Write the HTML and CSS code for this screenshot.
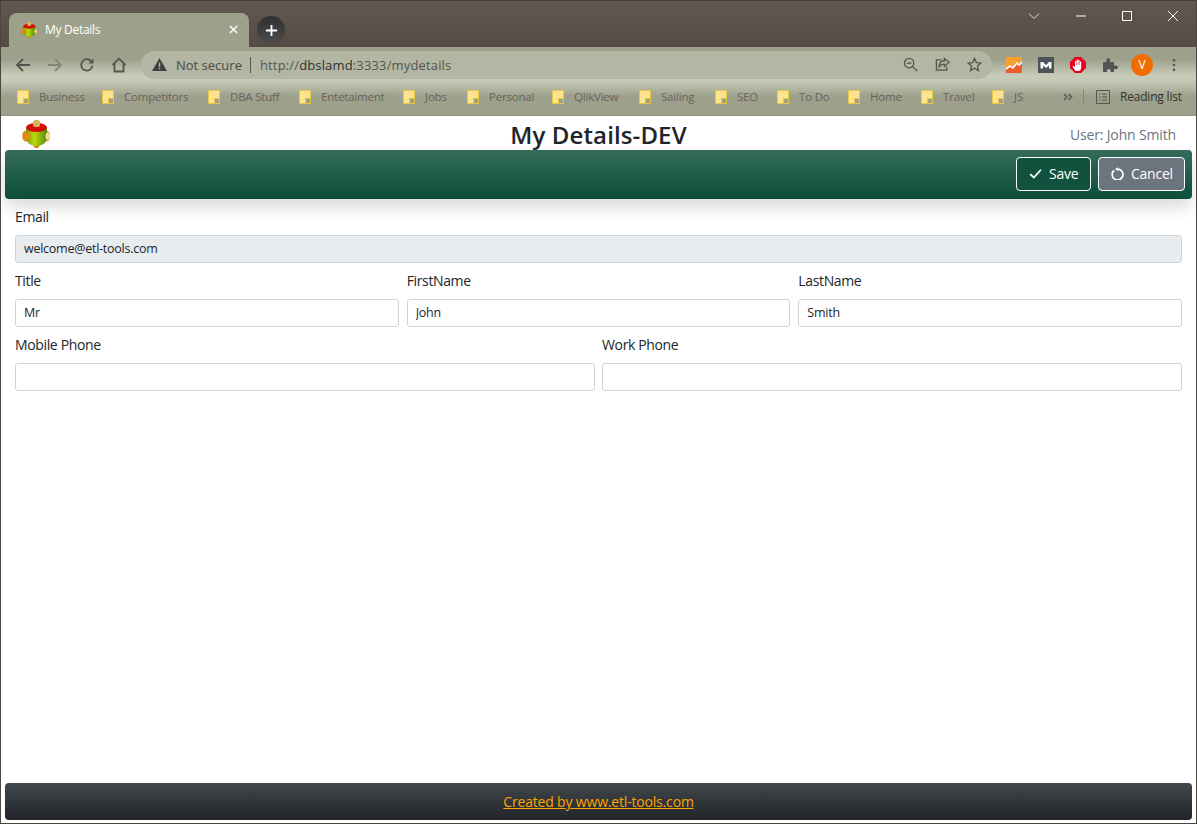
FILE: index.html
```html
<!DOCTYPE html>
<html lang="en">
<head>
<meta charset="utf-8">
<title>My Details</title>
<link rel="stylesheet" href="styles.css">
</head>
<body>
<div class="window">
  <div class="titlebar">
    <div class="tab">
      <svg class="favicon" viewBox="0 0 28 28"><use href="#logo"/></svg>
      <span class="tab-title">My Details</span>
      <svg class="tab-close" viewBox="0 0 10 10"><path d="M1 1l8 8M9 1l-8 8"/></svg>
    </div>
    <div class="newtab"><svg viewBox="0 0 14 14"><path d="M7 1v12M1 7h12"/></svg></div>
    <div class="winctl">
      <svg class="wc wc-chev" viewBox="0 0 12 12"><path d="M1 3.500l5 5 5-5"/></svg>
      <svg class="wc wc-min" viewBox="0 0 12 12"><path d="M1 6h10"/></svg>
      <svg class="wc wc-max" viewBox="0 0 12 12"><path d="M1.500 1.500h9v9h-9z"/></svg>
      <svg class="wc wc-close" viewBox="0 0 12 12"><path d="M1 1l10 10M11 1L1 11"/></svg>
    </div>
  </div>
  <div class="navbar">
    <svg class="nav" viewBox="0 0 16 16"><path d="M15 8H2M8 2L2 8l6 6"/></svg>
    <svg class="nav nav-off" viewBox="0 0 16 16"><path d="M1 8h13M8 2l6 6-6 6"/></svg>
    <svg class="nav" viewBox="0 0 16 16"><path d="M13.500 8.500a5.700 5.700 0 1 1-1.400-4.400"/><path class="fill" d="M14.500 1.500v5h-5z"/></svg>
    <svg class="nav" viewBox="0 0 16 16"><path d="M1.500 8L8 1.700 14.500 8M3.500 6.500v8h9v-8"/></svg>
    <div class="omnibox">
      <svg class="warn" viewBox="0 0 16 14"><path d="M8 0l8 14H0z"/><path class="warn-mark" d="M8 5v4.500M8 10.500v1.500"/></svg>
      <span class="notsecure">Not secure</span>
      <span class="omni-sep"></span>
      <span class="url">http://<b>dbslamd</b>:3333/mydetails</span>
      <svg class="omni-ic" viewBox="0 0 16 16"><circle cx="6.500" cy="6.500" r="5"/><path d="M10 10l5 5M4 6.500h5"/></svg>
      <svg class="omni-ic" viewBox="0 0 16 16"><path d="M7 3H1.500v11h11v-4"/><path d="M15 5.500L10 1.500v2.500C6 4 4.500 7 4.500 10.500 6 8 8 7.500 10 7.500V10z"/></svg>
      <svg class="omni-ic" viewBox="0 0 16 16"><path d="M8 1.500l2 4.500 4.800.500-3.600 3.200 1 4.800L8 12l-4.200 2.500 1-4.800L1.200 6.500 6 6z"/></svg>
    </div>
    <svg class="ext" viewBox="0 0 16 16"><rect width="16" height="16" fill="#f6a02d"/><path d="M0 11l4-3 3 2 4-5 2 2 3-3v12H0z" fill="#ee5a2b"/><path d="M0 12l4-3 3 2 4-5 2 2 3-3" fill="none" stroke="#fff" stroke-width="1.600"/></svg>
    <svg class="ext" viewBox="0 0 16 16"><rect width="16" height="16" fill="#4a5358"/><path d="M2.500 11.500V5h2.500L8 8l3-3h2.500v6.500h-2.500V8.500L8 11 5 8.500v3z" fill="#fff"/></svg>
    <svg class="ext" viewBox="0 0 16 16"><path d="M5 0h6l5 5v6l-5 5H5l-5-5V5z" fill="#e8001c"/><path d="M5.500 14L2.500 9.500l1-.800L5 10V4h1.200v4h.4V2.500h1.300V8h.4V3h1.300v5h.4V4.500h1.200V10.500c0 2-1 3.500-3 3.500z" fill="#fff"/></svg>
    <svg class="ext puzzle" viewBox="0 0 16 16"><path d="M1 5h3.500C4 2 5 1 6.200 1s2.200 1 1.800 4H12v3.500c3-.500 4 .600 4 1.800s-1 2.200-4 1.700V15H8.500c.500-2.500-.600-3-1.700-3S4.700 12.500 5.200 15H1z" fill="#555"/></svg>
    <div class="avatar">V</div>
    <svg class="kebab" viewBox="0 0 4 16"><circle cx="2" cy="2.500" r="1.500"/><circle cx="2" cy="8" r="1.500"/><circle cx="2" cy="13.500" r="1.500"/></svg>
  </div>
  <div class="bookmarks">
    <div class="bm bm-1"><i class="folder"></i>Business</div>
    <div class="bm bm-2"><i class="folder"></i>Competitors</div>
    <div class="bm bm-3"><i class="folder"></i>DBA Stuff</div>
    <div class="bm bm-4"><i class="folder"></i>Entetaiment</div>
    <div class="bm bm-5"><i class="folder"></i>Jobs</div>
    <div class="bm bm-6"><i class="folder"></i>Personal</div>
    <div class="bm bm-7"><i class="folder"></i>QlikView</div>
    <div class="bm bm-8"><i class="folder"></i>Sailing</div>
    <div class="bm bm-9"><i class="folder"></i>SEO</div>
    <div class="bm bm-10"><i class="folder"></i>To Do</div>
    <div class="bm bm-11"><i class="folder"></i>Home</div>
    <div class="bm bm-12"><i class="folder"></i>Travel</div>
    <div class="bm bm-13"><i class="folder"></i>JS</div>
    <svg class="more" viewBox="0 0 10 8"><path d="M1 1l3 3-3 3M5.500 1l3 3-3 3"/></svg>
    <span class="bm-sep"></span>
    <svg class="rl-icon" viewBox="0 0 14 14"><path d="M.5.500h13v13H.5zM3 4h1.500M3 7h1.500M3 10h1.500M6 4h5M6 7h5M6 10h5"/></svg>
    <span class="reading">Reading list</span>
  </div>
  <div class="app">
    <header class="app-head">
      <svg class="logo" viewBox="0 0 28 28">
        <defs>
          <linearGradient id="body" x1="0" x2="1" y1="0" y2="0"><stop offset="0" stop-color="#6f9c08"/><stop offset=".4" stop-color="#bcd80e"/><stop offset="1" stop-color="#4f8a08"/></linearGradient>
          <g id="logo">
            <circle cx="14.500" cy="25" r="3" fill="#e8780c"/>
            <ellipse cx="4" cy="16" rx="3.800" ry="5.500" fill="#e08a10"/>
            <ellipse cx="25" cy="16" rx="3" ry="5.500" fill="#e2a63a"/>
            <path d="M4 7h21v10c0 5-4 9-10.500 9S4 22 4 17z" fill="url(#body)"/>
            <ellipse cx="6" cy="16" rx="2.500" ry="4" fill="#e08a10"/>
            <ellipse cx="25.500" cy="16" rx="2" ry="3.500" fill="#f3dca0"/>
            <ellipse cx="14.500" cy="7.500" rx="10.500" ry="4.500" fill="#d40f06"/>
            <rect x="11" y="0" width="7" height="7" rx="2.500" fill="#d9b060"/>
          </g>
        </defs>
        <use href="#logo"/>
      </svg>
      <h1 class="app-title">My Details-DEV</h1>
      <span class="app-user">User: John Smith</span>
    </header>
    <div class="action-bar">
      <button class="btn btn-save" type="button">
        <svg class="btn-ic" viewBox="0 0 12 12"><path d="M1 6.500l3.500 3.200L11 2.500"/></svg>Save
      </button>
      <button class="btn btn-cancel" type="button">
        <svg class="btn-ic" viewBox="0 0 12 12"><path d="M2.800 3.200A5 5 0 1 0 6 2"/><path class="fill" d="M6.500 .2v3.600L3.600 2z"/></svg>Cancel
      </button>
    </div>
    <form class="form">
      <div class="row">
        <label class="field"><span class="lbl">Email</span><input class="input" value="welcome@etl-tools.com" disabled></label>
      </div>
      <div class="row">
        <label class="field"><span class="lbl">Title</span><input class="input" value="Mr"></label>
        <label class="field"><span class="lbl">FirstName</span><input class="input" value="John"></label>
        <label class="field"><span class="lbl">LastName</span><input class="input" value="Smith"></label>
      </div>
      <div class="row row-tight">
        <label class="field"><span class="lbl">Mobile Phone</span><input class="input"></label>
        <label class="field"><span class="lbl">Work Phone</span><input class="input"></label>
      </div>
    </form>
    <footer class="footer"><a href="#">Created by www.etl-tools.com</a></footer>
  </div>
</div>
</body>
</html>
```
FILE: styles.css
```css
* { box-sizing: border-box; }
html, body { margin: 0; height: 100%; }
body { font-family: "Open Sans", "Noto Sans", "Liberation Sans", sans-serif; background: #fff; overflow: hidden; }
.window { height: 824px; width: 1197px; display: flex; flex-direction: column; border: 1px solid #4a4640; border-top-color: #3f3d3a; overflow: hidden; }

.titlebar { height: 46px; flex: none; display: flex; align-items: flex-start; padding: 12px 0 0 8px; background: linear-gradient(#62584f, #564b42); position: relative; }
.tab { width: 240px; height: 34px; background: #9da18c; border-radius: 8px 8px 0 0; display: flex; align-items: center; padding: 0 11px 1px 12px; color: #fff; font-size: 12px; }
.favicon { width: 16px; height: 16px; flex: none; margin-right: 8px; }
.tab-title { flex: 1; letter-spacing: -.28px; }
.tab-close { width: 9px; height: 9px; fill: none; stroke: #fff; stroke-width: 1.600; }
.newtab { width: 28px; height: 28px; margin: 3px 0 0 8px; border-radius: 50%; background: linear-gradient(#2f2f2f, #4c4c4c); display: flex; align-items: center; justify-content: center; }
.newtab svg { width: 13px; height: 13px; fill: none; stroke: #fff; stroke-width: 2; }
.winctl { position: absolute; top: 9px; right: 0; display: flex; align-items: center; }
.wc { width: 12px; height: 12px; fill: none; stroke: #fff; stroke-width: 1; margin-right: 34px; }
.wc-chev { stroke: #ddd; margin-right: 35px; }
.wc-close { margin-right: 17px; }

.navbar { height: 35px; flex: none; display: flex; align-items: center; padding: 0 0 0 14px; background: linear-gradient(#9da18c 0, #9da18c 12px, #c9ccba 29px, #c4c7b4 35px); }
.nav { width: 16px; height: 16px; fill: none; stroke: #55554f; stroke-width: 1.800; margin-right: 16px; }
.nav-off { stroke: #83867a; }
.nav .fill { fill: #55554f; stroke: none; }
.navbar .nav:nth-of-type(4) { margin-right: 14px; }
.omnibox { width: 851px; height: 28px; margin-right: 14px; background: #b2b6a3; border-radius: 14px; display: flex; align-items: center; padding: 0 10px 0 11px; font-size: 13px; color: #3d3d39; }
.warn { width: 15px; height: 13px; fill: #3f3f42; margin-right: 9px; flex: none; }
.warn-mark { stroke: #b2b6a3; stroke-width: 1.500; fill: none; }
.notsecure { color: #4b4b46; }
.omni-sep { width: 1px; height: 16px; background: #55554f; margin: 0 9px 0 8px; }
.url { flex: 1; color: #55554f; letter-spacing: .15px; }
.url b { font-weight: 400; color: #30302d; }
.omni-ic { width: 15px; height: 15px; fill: none; stroke: #55554f; stroke-width: 1.400; margin-left: 17px; flex: none; }
.ext { width: 16px; height: 16px; margin-right: 16px; flex: none; }
.avatar { width: 22px; height: 22px; margin: 0 19px 0 -3px; border-radius: 50%; background: #f26d00; color: #fff; font-size: 12px; display: flex; align-items: center; justify-content: center; flex: none; }
.kebab { width: 4px; height: 14px; fill: #55554f; flex: none; }

.bookmarks { height: 34px; flex: none; display: flex; align-items: center; background: linear-gradient(#c4c7b4 0, #9da18c 14px, #9da18c 33px, #85887a 34px); font-size: 11.500px; color: #6a625c; padding: 0 0 5px 16px; letter-spacing: -.2px; }
.bm { display: flex; align-items: center; flex: none; }
.folder { display: block; width: 12px; height: 14px; margin-right: 10px; background: #fde48f; border: 1px solid #e9c545; border-radius: 1px; position: relative; }
.folder::after { content: ""; position: absolute; right: -1px; bottom: -1px; width: 4px; height: 4px; background: #9da18c; border: 1px solid #e9c545; }
.bm-1 { width: 85px; }
.bm-2 { width: 106px; }
.bm-3 { width: 91px; }
.bm-4 { width: 104px; }
.bm-5 { width: 64px; }
.bm-6 { width: 85px; }
.bm-7 { width: 87px; }
.bm-8 { width: 76px; }
.bm-9 { width: 62px; }
.bm-10 { width: 71px; }
.bm-11 { width: 73px; }
.bm-12 { width: 71px; }
.bm-13 { width: 71px; }
.more { width: 10px; height: 8px; fill: none; stroke: #66665f; stroke-width: 1.800; flex: none; }
.bm-sep { width: 1px; height: 16px; background: #85887a; margin: 0 12px 0 10px; }
.rl-icon { width: 14px; height: 14px; fill: none; stroke: #55554f; stroke-width: 1; margin-right: 10px; flex: none; }
.reading { color: #33332f; font-size: 12px; letter-spacing: -.2px; }

.app { flex: 1; display: flex; flex-direction: column; padding: 0 4px 3px; min-height: 0; }
.app-head { height: 34px; flex: none; display: flex; align-items: flex-start; position: relative; justify-content: flex-end; padding-right: 16px; }
.logo { position: absolute; left: 17px; top: 4px; width: 28px; height: 28px; }
.app-title { position: absolute; left: 0; right: 0; margin: 3px 0 0; text-align: center; font-size: 24px; line-height: 32px; font-weight: 600; color: #212529; letter-spacing: .12px; }
.app-user { font-size: 14px; color: #6c757d; margin-top: 9px; line-height: 20px; letter-spacing: -.15px; position: relative; }
.action-bar { height: 49px; flex: none; display: flex; align-items: center; justify-content: flex-end; gap: 7px; padding: 0 7px 1px 0; border-radius: 4px; background: linear-gradient(#346b5b, #0d4e3b); box-shadow: 0 8px 16px rgba(0,0,0,.15); position: relative; }
.btn { height: 34px; display: flex; align-items: center; padding: 0 11px 2px 12px; border: 1px solid #fff; border-radius: 4px; color: #fff; font: inherit; font-size: 14px; letter-spacing: -.25px; }
.btn-save { width: 75px; background: #10523e; }
.btn-cancel { width: 87px; background: #6c757d; }
.btn-ic { width: 13px; height: 13px; margin-right: 7px; fill: none; stroke: #fff; stroke-width: 1.600; flex: none; }
.btn-ic .fill { fill: #fff; stroke: none; }

.form { flex: 1; padding: 4px 10px 0 10px; display: flex; flex-direction: column; }
.row { display: flex; gap: 8px; height: 64px; }
.row-tight { gap: 7px; }
.field { flex: 1 1 0; min-width: 0; display: flex; flex-direction: column; }
.lbl { font-size: 14px; line-height: 28px; height: 32px; color: #212529; letter-spacing: -.36px; }
.input { height: 28px; width: 100%; border: 1px solid #ced4da; border-radius: 3px; padding: 0 8px 2px; font: inherit; font-size: 12.500px; color: #212529; background: #fff; letter-spacing: -.25px; }
.input:disabled { background: #e9ecef; color: #212529; opacity: 1; }
.footer { height: 37px; flex: none; display: flex; align-items: center; justify-content: center; border-radius: 4px; background: linear-gradient(#42474b, #212529); font-size: 14px; letter-spacing: -.18px; }
.footer a { color: #ffa500; }
```
